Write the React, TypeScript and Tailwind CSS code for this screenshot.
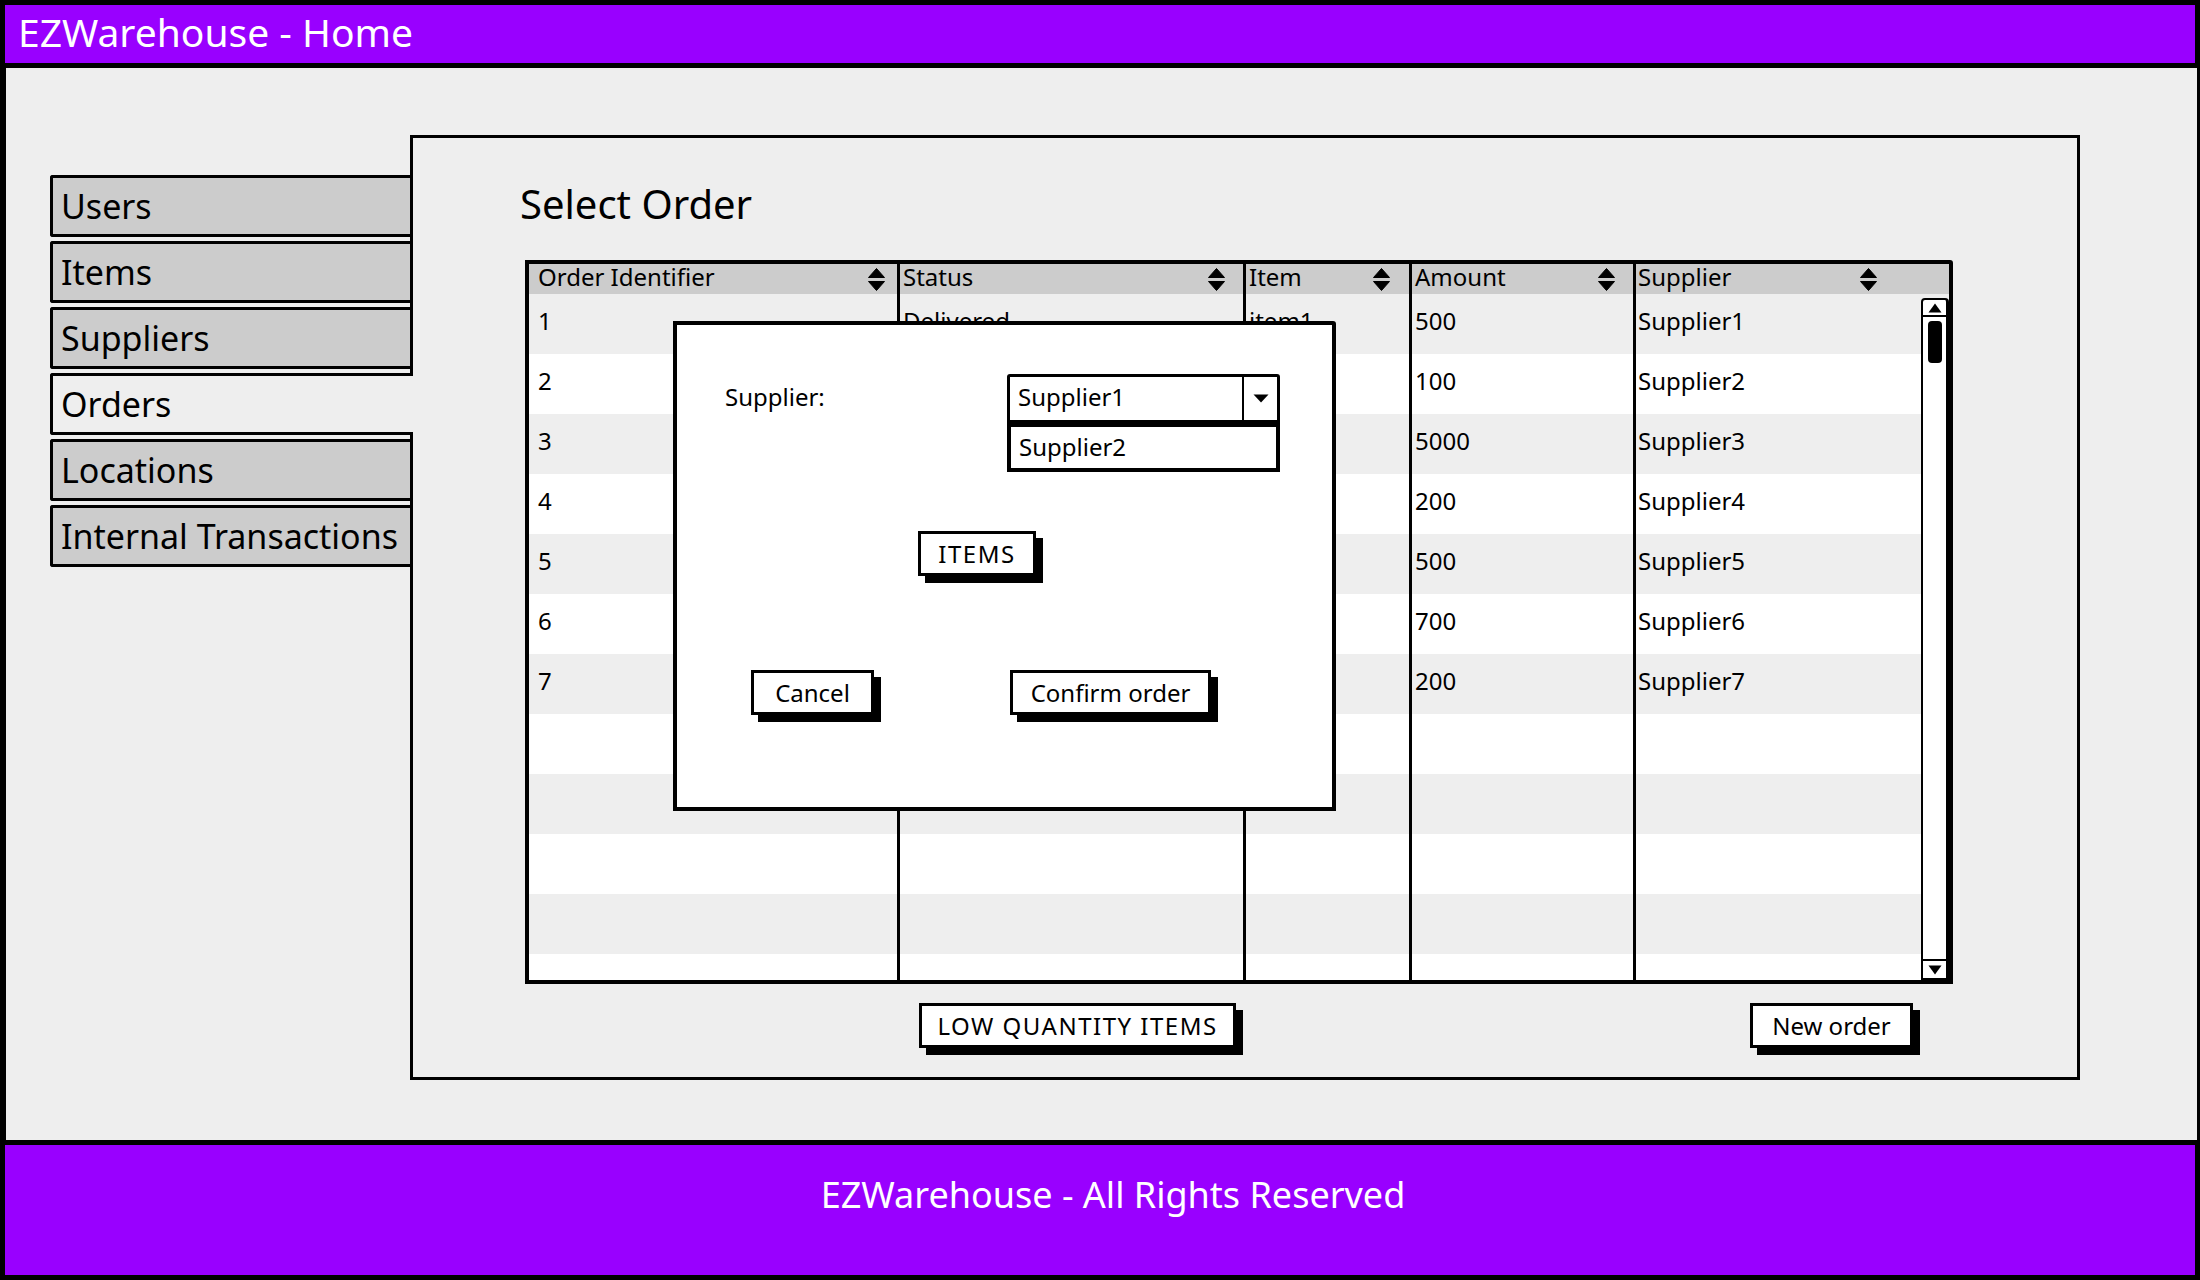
import React from 'react';

const tabs = ['Users', 'Items', 'Suppliers', 'Orders', 'Locations', 'Internal Transactions'];

// status / item of rows 2-7 sit under the dialog and are not visible
const rows = [
    { id: '1', status: 'Delivered', item: 'item1', amount: '500', supplier: 'Supplier1' },
    { id: '2', status: '', item: '', amount: '100', supplier: 'Supplier2' },
    { id: '3', status: '', item: '', amount: '5000', supplier: 'Supplier3' },
    { id: '4', status: '', item: '', amount: '200', supplier: 'Supplier4' },
    { id: '5', status: '', item: '', amount: '500', supplier: 'Supplier5' },
    { id: '6', status: '', item: '', amount: '700', supplier: 'Supplier6' },
    { id: '7', status: '', item: '', amount: '200', supplier: 'Supplier7' },
    null, null, null, null, null,
];

const SortIcon: React.FC = () => (
    <svg width="17" height="23" viewBox="0 0 17 23" className="shrink-0">
        <path d="M8.5 0.5 L16.5 9.5 L0.5 9.5 Z" fill="#000" strokeLinejoin="round" stroke="#000" strokeWidth="1" />
        <path d="M0.5 13.5 L16.5 13.5 L8.5 22.5 Z" fill="#000" strokeLinejoin="round" stroke="#000" strokeWidth="1" />
    </svg>
);

const SketchButton: React.FC<{ label: string; width: string; tracking?: string }> = ({ label, width, tracking = '' }) => (
    <div className={`${width} h-[45px] border-[3px] border-black bg-white shadow-[7px_7px_0_0_#000] flex items-center justify-center text-[24px] leading-[32px] text-black ${tracking}`}>
        {label}
    </div>
);

const cols = 'grid grid-cols-[371px_346px_166px_224px_1fr]';

const App: React.FC = () => {
    return (
        <div className="w-[2200px] h-[1280px] flex flex-col bg-[#eeeeee] font-['Noto_Sans',sans-serif] text-black overflow-hidden">
            {/* header */}
            <div className="h-[68px] shrink-0 bg-[#9900ff] border-[5px] border-black pl-[13px] pt-[4px]">
                <span className="text-[39px] leading-[46px] text-white">EZWarehouse - Home</span>
            </div>

            {/* main */}
            <div className="flex-1 flex border-l-[6px] border-r-[3px] border-black pl-[44px] pt-[67px]">
                <div className="flex h-[945px]">
                    {/* sidebar */}
                    <div className="w-[363px] border-r-[3px] border-black pt-[40px] flex flex-col gap-[4px]">
                        {tabs.map((t) => {
                            const active = t === 'Orders';
                            return (
                                <div
                                    key={t}
                                    className={
                                        active
                                            ? 'relative z-10 w-[363px] h-[62px] border-[3px] border-r-0 border-black rounded-l-[3px] bg-[#eeeeee] pl-[8px] flex items-center text-[34px] leading-[40px]'
                                            : 'w-[360px] h-[62px] border-[3px] border-r-0 border-black rounded-l-[3px] bg-[#cccccc] pl-[8px] flex items-center text-[34px] leading-[40px]'
                                    }
                                >
                                    {t}
                                </div>
                            );
                        })}
                    </div>

                    {/* content panel */}
                    <div className="w-[1667px] border-t-[3px] border-r-[3px] border-b-[3px] border-black pl-[107px] pt-[44px]">
                        <h1 className="text-[40px] leading-[44px]">Select Order</h1>

                        <div className="relative w-[1428px] ml-[5px] mt-[34px]">
                            <div className="h-[724px] border-[4px] border-black bg-white flex flex-col overflow-hidden rounded-tr-[3px]">
                                <div className={`${cols} h-[30px] shrink-0 bg-[#cccccc] text-[24px] leading-[24px]`}>
                                    <div className="border-r-[3px] border-black pl-[9px] pr-[12px] flex justify-between items-center">
                                        <span className="-mt-[4px]">Order Identifier</span>
                                        <SortIcon />
                                    </div>
                                    <div className="border-r-[3px] border-black pl-[3px] pr-[18px] flex justify-between items-center">
                                        <span className="-mt-[4px]">Status</span>
                                        <SortIcon />
                                    </div>
                                    <div className="border-r-[3px] border-black pl-[3px] pr-[19px] flex justify-between items-center">
                                        <span className="-mt-[4px]">Item</span>
                                        <SortIcon />
                                    </div>
                                    <div className="border-r-[3px] border-black pl-[3px] pr-[18px] flex justify-between items-center">
                                        <span className="-mt-[4px]">Amount</span>
                                        <SortIcon />
                                    </div>
                                    <div className="pl-[2px] pr-[72px] flex justify-between items-center">
                                        <span className="-mt-[4px]">Supplier</span>
                                        <SortIcon />
                                    </div>
                                </div>

                                <div className="flex flex-1 min-h-0">
                                    <div className="w-[1392px] overflow-hidden">
                                        {rows.map((r, i) => (
                                            <div
                                                key={i}
                                                className={`${cols} h-[60px] text-[24px] leading-[32px] ${i % 2 === 0 ? 'bg-[#eeeeee]' : 'bg-white'}`}
                                            >
                                                <div className="border-r-[3px] border-black pl-[9px] pt-[11px]">{r?.id}</div>
                                                <div className="border-r-[3px] border-black pl-[3px] pt-[11px]">{r?.status}</div>
                                                <div className="border-r-[3px] border-black pl-[3px] pt-[11px]">{r?.item}</div>
                                                <div className="border-r-[3px] border-black pl-[3px] pt-[11px]">{r?.amount}</div>
                                                <div className="pl-[2px] pt-[11px]">{r?.supplier}</div>
                                            </div>
                                        ))}
                                    </div>

                                    {/* scrollbar */}
                                    <div className="w-[28px] pt-[4px] bg-[#eeeeee] flex">
                                        <div className="flex-1 flex flex-col border-[2px] border-r-[3px] border-black rounded-t-[4px] bg-white">
                                            <div className="h-[17px] border-b-[2px] border-black flex items-center justify-center">
                                                <svg width="14" height="10" viewBox="0 0 14 10"><path d="M7 0.5 L13.5 9.5 L0.5 9.5 Z" fill="#000" /></svg>
                                            </div>
                                            <div className="mt-[4px] mx-auto w-[14px] h-[42px] bg-black rounded-[4px]" />
                                            <div className="flex-1" />
                                            <div className="h-[19px] border-t-[2px] border-black flex items-center justify-center">
                                                <svg width="14" height="10" viewBox="0 0 14 10"><path d="M0.5 0.5 L13.5 0.5 L7 9.5 Z" fill="#000" /></svg>
                                            </div>
                                        </div>
                                    </div>
                                </div>
                            </div>

                            {/* modal */}
                            <div className="absolute left-[148px] top-[61px] w-[663px] h-[490px] border-[4px] border-black bg-white flex flex-col pt-[49px] rounded-tr-[3px]">
                                <div className="flex items-start ml-[48px]">
                                    <div className="w-[282px] h-[50px] flex items-center pb-[5px] text-[24px] leading-[32px]">Supplier:</div>
                                    <div className="flex flex-col">
                                        <div className="w-[273px] h-[50px] border-[3px] border-b-[4px] border-black rounded-t-[3px] flex">
                                            <div className="flex-1 pl-[8px] pb-[4px] flex items-center text-[24px] leading-[32px]">Supplier1</div>
                                            <div className="w-[35px] border-l-[2px] border-black flex items-center justify-center">
                                                <svg width="16" height="9" viewBox="0 0 16 9"><path d="M0.5 0.5 L15.5 0.5 L8 8.5 Z" fill="#000" /></svg>
                                            </div>
                                        </div>
                                        <div className="w-[273px] h-[48px] border-[4px] border-t-[3px] border-black flex items-center pl-[8px] pb-[2px] text-[24px] leading-[32px]">
                                            Supplier2
                                        </div>
                                    </div>
                                </div>

                                <div className="ml-[241px] mt-[59px]">
                                    <SketchButton label="ITEMS" width="w-[118px]" tracking="tracking-[1.5px]" />
                                </div>

                                <div className="flex ml-[74px] mt-[94px] gap-[136px]">
                                    <SketchButton label="Cancel" width="w-[123px]" />
                                    <SketchButton label="Confirm order" width="w-[201px]" />
                                </div>
                            </div>
                        </div>

                        <div className="flex mt-[19px] ml-[399px]">
                            <SketchButton label="LOW QUANTITY ITEMS" width="w-[317px]" tracking="tracking-[1.5px]" />
                            <div className="ml-[514px]">
                                <SketchButton label="New order" width="w-[163px]" />
                            </div>
                        </div>
                    </div>
                </div>
            </div>

            {/* footer */}
            <div className="h-[140px] shrink-0 bg-[#9900ff] border-[5px] border-black flex justify-center pl-[26px] pt-[29px]">
                <span className="text-[36px] leading-[42px] text-white">EZWarehouse - All Rights Reserved</span>
            </div>
        </div>
    );
};

export default App;
